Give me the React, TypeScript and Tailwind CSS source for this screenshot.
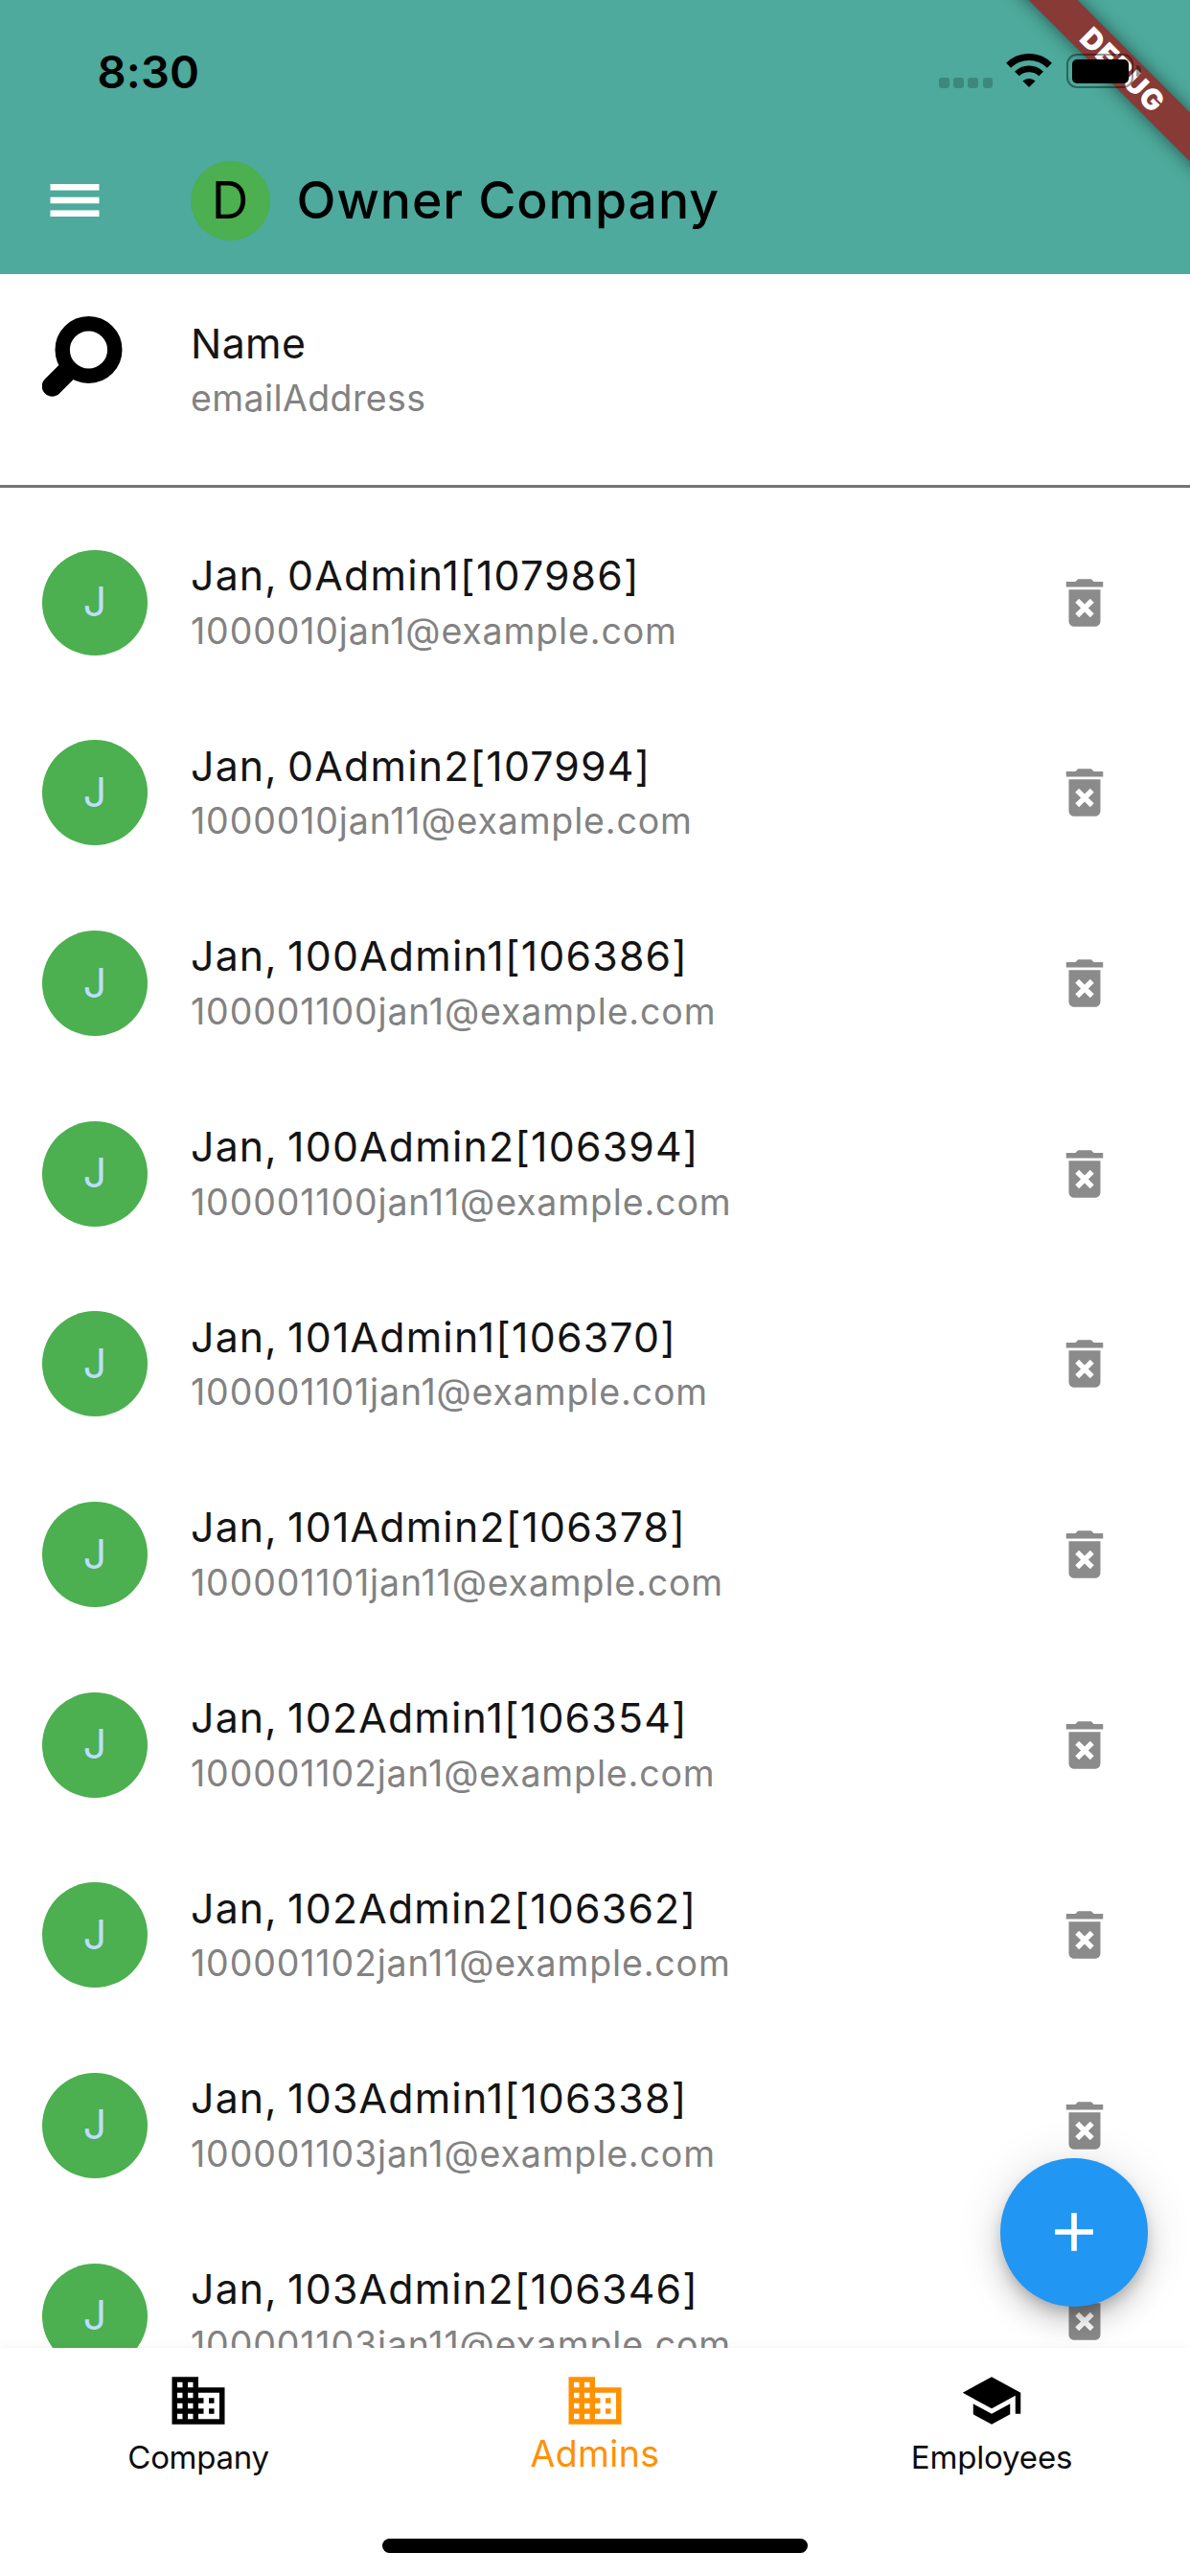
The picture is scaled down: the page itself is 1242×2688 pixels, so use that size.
import React from "react";
import { MdAdd, MdBusiness, MdDeleteForever, MdSchool } from "react-icons/md";

const admins = [
  { name: "Jan, 0Admin1[107986]", email: "1000010jan1@example.com" },
  { name: "Jan, 0Admin2[107994]", email: "1000010jan11@example.com" },
  { name: "Jan, 100Admin1[106386]", email: "100001100jan1@example.com" },
  { name: "Jan, 100Admin2[106394]", email: "100001100jan11@example.com" },
  { name: "Jan, 101Admin1[106370]", email: "100001101jan1@example.com" },
  { name: "Jan, 101Admin2[106378]", email: "100001101jan11@example.com" },
  { name: "Jan, 102Admin1[106354]", email: "100001102jan1@example.com" },
  { name: "Jan, 102Admin2[106362]", email: "100001102jan11@example.com" },
  { name: "Jan, 103Admin1[106338]", email: "100001103jan1@example.com" },
  { name: "Jan, 103Admin2[106346]", email: "100001103jan11@example.com" },
];

function DebugBanner() {
  return (
    <div className="pointer-events-none absolute top-0 right-0 h-[260px] w-[260px] overflow-hidden">
      <div className="absolute top-[54px] left-[-11.5px] flex h-[36px] w-[400px] rotate-45 items-center justify-center bg-[#883a36] shadow-[0_0_18px_rgba(0,0,0,0.5)]">
        <span className="pl-[3px] text-[30px] leading-none font-black tracking-[1.2px] text-white">DEBUG</span>
      </div>
    </div>
  );
}

function WifiIcon() {
  return (
    <svg viewBox="0 0 48 36" className="h-[36px] w-[48px]" fill="none" stroke="#000">
      <path d="M2.6 12.2 A30.5 30.5 0 0 1 45.4 12.2" strokeWidth="7" />
      <path d="M11.4 21 A18 18 0 0 1 36.6 21" strokeWidth="6.6" />
      <path d="M24 35 L17.4 28.6 A9.4 9.4 0 0 1 30.6 28.6 Z" fill="#000" stroke="none" />
    </svg>
  );
}

function Battery() {
  return (
    <div className="flex items-center gap-[3px]">
      <div className="h-[36px] w-[70px] rounded-[11px] border-[2.5px] border-black/40 p-[3.5px]">
        <div className="h-full w-full rounded-[5px] bg-black" />
      </div>
      <div className="h-[12px] w-[5px] rounded-r-full bg-black/40" />
    </div>
  );
}

function StatusBar() {
  return (
    <div className="flex h-[132px] items-start justify-between pr-[51px] pl-[101.5px] pt-[56px]">
      <span className="text-[47px] leading-[37px] font-semibold tracking-[0.2px] text-black">8:30</span>
      <div className="relative z-10 flex items-start">
        <div className="mt-[25px] mr-[14px] flex gap-[4.6px]">
          {[0, 1, 2, 3].map((i) => (
            <span key={i} className="h-[11px] w-[10.5px] rounded-[3px] bg-[#3d887c]" />
          ))}
        </div>
        <WifiIcon />
        <div className="ml-[15px]">
          <Battery />
        </div>
      </div>
    </div>
  );
}

function MenuIcon() {
  return (
    <svg viewBox="0 0 68 68" className="h-[68px] w-[68px]" fill="#fff">
      <rect x="8.5" y="17" width="51" height="6.6" />
      <rect x="8.5" y="30.7" width="51" height="6.6" />
      <rect x="8.5" y="44.4" width="51" height="6.6" />
    </svg>
  );
}

function AppBar() {
  return (
    <div className="flex h-[154px] items-center pl-[43.5px]">
      <MenuIcon />
      <div className="ml-[87px] flex h-[83px] w-[83px] items-center justify-center rounded-full bg-[#4caf50] text-[53.5px] leading-none text-black">
        D
      </div>
      <h1 className="ml-[28px] text-[53.5px] leading-none font-medium tracking-[0.95px] text-black">Owner Company</h1>
    </div>
  );
}

function SearchIcon() {
  return (
    <svg viewBox="0 0 84 84" className="h-[84px] w-[84px]" fill="none" stroke="#000">
      <circle cx="48.5" cy="35" r="27.3" strokeWidth="15.4" />
      <path d="M25.5 58 L10.5 73" strokeWidth="21.5" strokeLinecap="round" />
    </svg>
  );
}

function SearchRow() {
  return (
    <div className="flex h-[223px] shrink-0 items-start border-b-[3px] border-[#757575] pl-[43.5px]">
      <div className="mt-[44px]">
        <SearchIcon />
      </div>
      <div className="mt-[43.5px] ml-[71.5px] flex flex-col tracking-[0.4px]">
        <span className="text-[42.8px] leading-[57.5px] text-[#141414]">Name</span>
        <span className="text-[37.5px] leading-[57.5px] text-[#828282]">emailAddress</span>
      </div>
    </div>
  );
}

function AdminRow({ name, email }: { name: string; email: string }) {
  return (
    <li className="flex h-[198.67px] shrink-0 items-center pr-[77.5px] pl-[44px]">
      <div className="flex h-[110px] w-[110px] items-center justify-center rounded-full bg-[#4caf50] text-[42.8px] leading-none text-[#bbdefb]">
        J
      </div>
      <div className="mt-[2px] ml-[45px] flex flex-1 flex-col whitespace-nowrap">
        <span className="text-[42.8px] leading-[57.5px] tracking-[1.2px] text-[#141414] [word-spacing:-3px]">{name}</span>
        <span className="text-[37.5px] leading-[57.5px] tracking-[0.86px] text-[#828282]">{email}</span>
      </div>
      <MdDeleteForever className="h-[66px] w-[66px] text-[#8b8b8b]" />
    </li>
  );
}

function BottomNav() {
  return (
    <nav className="relative z-10 h-[238px] shrink-0 bg-white shadow-[0_-2px_10px_rgba(0,0,0,0.04)]">
      <div className="grid grid-cols-3 pt-[22px] text-[33px] text-[#0c0c0c]">
        <div className="flex flex-col items-center">
          <MdBusiness className="h-[66px] w-[66px] text-black" />
          <span className="leading-[52px] tracking-[-0.3px]">Company</span>
        </div>
        <div className="flex flex-col items-center text-[#ff9100]">
          <MdBusiness className="h-[66px] w-[66px]" />
          <span className="text-[37.5px] leading-[45px] tracking-[0.4px]">Admins</span>
        </div>
        <div className="flex flex-col items-center">
          <MdSchool className="h-[66px] w-[66px] text-black" />
          <span className="leading-[52px] tracking-[-0.15px]">Employees</span>
        </div>
      </div>
      <div className="mx-auto mt-[59px] h-[15px] w-[444px] rounded-full bg-black" />
    </nav>
  );
}

export default function App() {
  return (
    <div className="relative flex h-[2688px] w-[1242px] flex-col overflow-hidden bg-white font-['Inter',sans-serif]">
      <header className="h-[286px] shrink-0 bg-[#4daa9c]">
        <DebugBanner />
        <StatusBar />
        <AppBar />
      </header>
      <SearchRow />
      <ul className="flex min-h-0 flex-1 flex-col overflow-hidden pt-[20.3px]">
        {admins.map((admin) => (
          <AdminRow key={admin.email} name={admin.name} email={admin.email} />
        ))}
      </ul>
      <BottomNav />
      <button
        aria-label="Add admin"
        className="absolute top-[2252px] left-[1043.5px] flex h-[154.5px] w-[154.5px] items-center justify-center rounded-full bg-[#2196f3] text-white shadow-[0_8px_14px_-3px_rgba(0,0,0,0.2),0_17px_28px_rgba(0,0,0,0.14),0_3px_50px_rgba(0,0,0,0.12)]"
      >
        <MdAdd className="h-[68px] w-[68px]" />
      </button>
    </div>
  );
}
